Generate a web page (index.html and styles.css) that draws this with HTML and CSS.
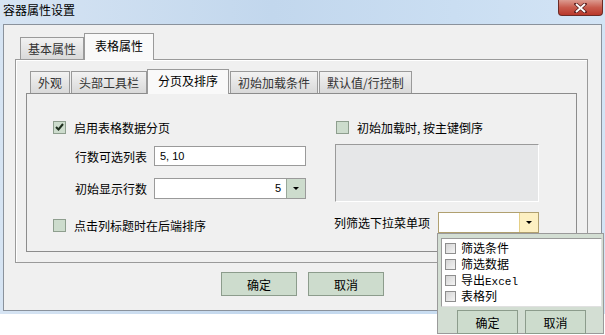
FILE: index.html
```html
<!DOCTYPE html>
<html lang="zh">
<head>
  <meta charset="UTF-8" />
  <title>容器属性设置</title>
  <link rel="stylesheet" href="styles.css">
</head>
<body>
  <div class="window">
    <div class="titlebar">
      <span class="title">容器属性设置</span>
      <span class="close">
        <svg width="13" height="10" viewBox="0 0 13 10">
          <path d="M2 1 L11 9 M11 1 L2 9" stroke="#5a2020" stroke-width="3.4" stroke-linecap="square"/>
          <path d="M2 1 L11 9 M11 1 L2 9" stroke="#fff" stroke-width="1.8"/>
        </svg>
      </span>
    </div>

    <div class="dialog">
      <div class="tabs outer-tabs">
        <div class="tab">基本属性</div>
        <div class="tab active">表格属性</div>
      </div>

      <div class="outer-panel">
        <div class="tabs inner-tabs">
          <div class="tab">外观</div>
          <div class="tab">头部工具栏</div>
          <div class="tab active">分页及排序</div>
          <div class="tab">初始加载条件</div>
          <div class="tab">默认值/行控制</div>
        </div>

        <div class="inner-panel">
          <div class="col col-left">
            <div class="check-row">
              <span class="checkbox checked">
                <svg width="9" height="8" viewBox="0 0 9 8"><path d="M1 4 L3.5 6.5 L8 1" fill="none" stroke="#1e2e1e" stroke-width="2"/></svg>
              </span>
              启用表格数据分页
            </div>
            <div class="field-row">
              <span class="label">行数可选列表</span>
              <span class="input">5, 10</span>
            </div>
            <div class="field-row gap-12">
              <span class="label">初始显示行数</span>
              <span class="combo">
                <span class="combo-value">5</span>
                <span class="combo-btn"><span class="arrow"></span></span>
              </span>
            </div>
            <div class="check-row gap-17">
              <span class="checkbox"></span>
              点击列标题时在后端排序
            </div>
          </div>

          <div class="col col-right">
            <div class="check-row">
              <span class="checkbox"></span>
              初始加载时, 按主键倒序
            </div>
            <div class="gray-box"></div>
            <div class="field-row right-row">
              <span class="label wide">列筛选下拉菜单项</span>
              <span class="combo small">
                <span class="combo-value"></span>
                <span class="combo-btn hover"><span class="arrow"></span></span>
              </span>
            </div>
          </div>
        </div>
      </div>

      <div class="buttons">
        <button class="btn">确定</button>
        <button class="btn">取消</button>
      </div>
    </div>
  </div>

  <div class="popup">
    <div class="popup-list">
      <div class="popup-item"><span class="mini-box"></span><span>筛选条件</span></div>
      <div class="popup-item"><span class="mini-box"></span><span>筛选数据</span></div>
      <div class="popup-item"><span class="mini-box"></span><span>导出<span class="mono">Excel</span></span></div>
      <div class="popup-item"><span class="mini-box"></span><span>表格列</span></div>
    </div>
    <div class="popup-buttons">
      <button class="btn small">确定</button>
      <button class="btn small">取消</button>
    </div>
  </div>
</body>
</html>
```

FILE: styles.css
```css
body {
  margin: 0;
  background: #fff;
  font-family: "Noto Sans CJK SC", "Liberation Sans", sans-serif;
  font-size: 12px;
  color: #000;
}

.window {
  width: 605px;
  height: 314px;
  box-sizing: border-box;
  padding: 0 3px 3px 3px;
  background: linear-gradient(90deg, #d6e4f3 0%, #c2d7ed 45%, #cadef2 75%, #d3e4f5 100%);
}

.titlebar {
  height: 24px;
  display: flex;
  justify-content: space-between;
  align-items: flex-start;
}

.title {
  font-size: 12px;
  line-height: 20px;
  color: #000;
}

.close {
  width: 45px;
  height: 16px;
  margin-right: -1px;
  box-sizing: border-box;
  border: 1px solid #6b2b26;
  border-top: none;
  border-radius: 0 0 4px 4px;
  background: linear-gradient(#dc9b90, #c85b4d 50%, #b9382b 100%);
  display: flex;
  align-items: center;
  justify-content: center;
}

.dialog {
  height: 287px;
  box-sizing: border-box;
  border: 1px solid #8a929c;
  background: #f0f0f0;
  padding-top: 8px;
}

/* tabs */
.tabs {
  display: flex;
  align-items: flex-end;
  position: relative;
  z-index: 1;
}

.tab {
  box-sizing: border-box;
  border: 1px solid #9a9a9a;
  border-bottom: none;
  background: linear-gradient(#f2f2f2, #d9d9d9);
  color: #333;
  font-size: 12px;
  padding: 0 7px;
  height: 22px;
  line-height: 21px;
  margin-right: 1px;
}

.tab.active {
  background: #f9f9f9;
  color: #000;
  margin-bottom: -1px;
}

.outer-tabs {
  padding-left: 16px;
  height: 26px;
}

.outer-tabs .tab.active {
  height: 27px;
  padding: 0 10px;
  line-height: 24px;
  margin-left: -1px;
}

.outer-panel {
  margin-left: 11px;
  width: 573px;
  height: 204px;
  box-sizing: border-box;
  border: 1px solid #9a9a9a;
  box-shadow: inset 1px 1px #fff;
  background: #f0f0f0;
  padding-top: 9px;
}

.inner-tabs {
  padding-left: 14px;
  height: 24px;
}

.inner-tabs .tab {
  padding: 0 7px;
}

.inner-tabs .tab.active {
  height: 25px;
  padding: 0 10px;
  line-height: 22px;
  margin-left: -1px;
}

.inner-panel {
  margin-left: 10px;
  width: 551px;
  height: 159px;
  box-sizing: border-box;
  border: 1px solid #8c8c8c;
  background: #f0f0f0;
  display: grid;
  grid-template-columns: 253px 204px;
  column-gap: 29px;
  padding: 23px 0 0 26px;
}

.col {
  display: flex;
  flex-direction: column;
}

.check-row {
  height: 20px;
  display: flex;
  align-items: center;
  gap: 8px;
}

.checkbox {
  width: 13px;
  height: 13px;
  box-sizing: border-box;
  border: 1px solid #8e9e8e;
  background: #cddccd;
  display: flex;
  align-items: center;
  justify-content: center;
}

.field-row {
  height: 20px;
  display: flex;
  align-items: center;
  margin-top: 9px;
  padding-left: 22px;
}

.gap-12 {
  margin-top: 12px;
}

.gap-17 {
  margin-top: 17px;
}

.label {
  width: 79px;
  flex: none;
}

.label.wide {
  width: 104px;
}

.input {
  width: 152px;
  height: 20px;
  box-sizing: border-box;
  border: 1px solid #9a9a9a;
  background: #fff;
  font-family: "Liberation Sans", sans-serif;
  font-size: 11px;
  line-height: 18px;
  padding-left: 5px;
}

.combo {
  width: 152px;
  height: 21px;
  box-sizing: border-box;
  border: 1px solid #9a9a9a;
  background: #fff;
  display: flex;
}

.combo.small {
  width: 101px;
  border-color: #b0a070;
}

.combo-value {
  flex: 1;
  text-align: right;
  font-family: "Liberation Sans", sans-serif;
  font-size: 11px;
  line-height: 19px;
  padding-right: 5px;
}

.combo-btn {
  width: 18px;
  border-left: 1px solid #9aa89a;
  background: #cddccd;
  display: flex;
  align-items: center;
  justify-content: center;
}

.combo-btn.hover {
  background: #fdf0c2;
  border-left-color: #e5cf85;
}

.arrow {
  width: 0;
  height: 0;
  border-left: 3px solid transparent;
  border-right: 3px solid transparent;
  border-top: 3px solid #000;
}

.col-right .check-row {
  margin-left: 1px;
}

.gray-box {
  margin-top: 7px;
  height: 58px;
  box-sizing: border-box;
  border: 1px solid #9a9a9a;
  border-right-color: #fff;
  border-bottom-color: #fff;
  background: #e6e7e8;
}

.right-row {
  padding-left: 0;
  margin-top: 10px;
  margin-left: -1px;
}

/* buttons */
.buttons {
  display: flex;
  justify-content: center;
  gap: 11px;
  margin-top: 9px;
}

.btn {
  width: 76px;
  height: 24px;
  border: 1px solid #8c9c8c;
  background: #cddccd;
  font-family: "Noto Sans CJK SC", sans-serif;
  font-size: 12px;
  color: #000;
  padding: 0;
}

/* popup menu over the combo */
.popup {
  position: absolute;
  left: 437px;
  top: 233px;
  width: 167px;
  height: 101px;
  box-sizing: border-box;
  border: 1px solid #9a9a9a;
  background: #d3ded3;
  padding: 4px 1px 0 3px;
}

.popup-list {
  height: 69px;
  box-sizing: border-box;
  border: 1px solid #9a9a9a;
  border-right-color: #e0e0e0;
  border-bottom-color: #e0e0e0;
  background: #fff;
  padding-top: 1px;
}

.popup-item {
  height: 16px;
  display: flex;
  align-items: center;
  gap: 5px;
  padding-left: 3px;
  line-height: 14px;
}

.mini-box {
  width: 11px;
  height: 11px;
  box-sizing: border-box;
  border: 1px solid #8e8e8e;
  background: linear-gradient(135deg, #d4d4d4, #f4f4f4);
}

.mono {
  font-family: "Liberation Mono", monospace;
  font-size: 11px;
  line-height: 1;
}

.popup-buttons {
  display: flex;
  justify-content: center;
  gap: 7px;
  margin-top: 3px;
}

.btn.small {
  width: 61px;
  height: 24px;
}
```
